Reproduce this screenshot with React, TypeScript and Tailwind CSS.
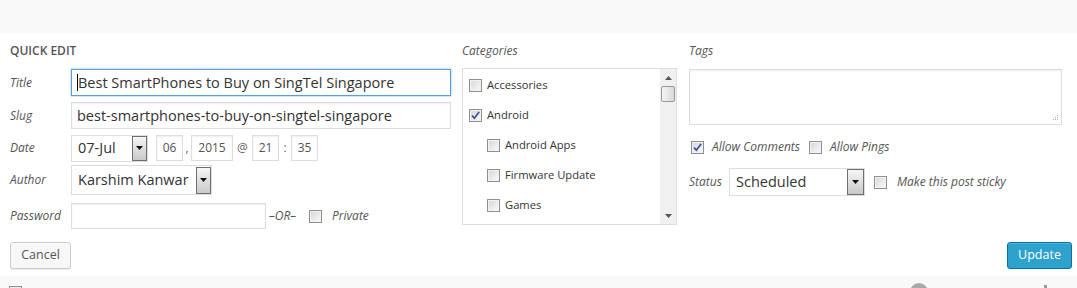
import React from "react";

const font = "font-['Open_Sans',sans-serif]";

function Check({ checked = false }: { checked?: boolean }) {
  return (
    <span className="flex h-[13px] w-[13px] shrink-0 items-center justify-center border border-[#8e8f8f] bg-linear-to-br from-[#d6d6d6] to-[#fbfbfb] shadow-[inset_0_0_0_1px_#f2f2f2]">
      {checked && (
        <svg width="11" height="11" viewBox="0 0 11 11">
          <path d="M2 5.6 L4.4 8.2 L9.2 1.8" fill="none" stroke="#3f4f9a" strokeWidth="1.7" />
        </svg>
      )}
    </span>
  );
}

function DropButton({ width }: { width: string }) {
  return (
    <span
      className={`flex h-full ${width} shrink-0 items-center justify-center border border-[#6f6f6f] bg-linear-to-b from-[#f6f6f6] to-[#c9c9c9]`}
    >
      <svg width="7" height="4" viewBox="0 0 7 4">
        <path d="M0 0 H7 L3.5 4 Z" fill="#111" />
      </svg>
    </span>
  );
}

function Label({ text, width }: { text: string; width: string }) {
  return <span className={`${width} shrink-0 text-[12px] italic text-[#555]`}>{text}</span>;
}

function SmallBox({ value, width }: { value: string; width: string }) {
  return (
    <span
      className={`flex h-[26px] ${width} items-center justify-center border border-[#ddd] bg-white text-[12px] text-[#555] shadow-[inset_0_1px_2px_rgba(0,0,0,0.07)]`}
    >
      {value}
    </span>
  );
}

const categories = [
  { name: "Accessories", checked: false, child: false },
  { name: "Android", checked: true, child: false },
  { name: "Android Apps", checked: false, child: true },
  { name: "Firmware Update", checked: false, child: true },
  { name: "Games", checked: false, child: true },
];

export default function App() {
  return (
    <div className={`${font} flex h-[288px] w-[1077px] flex-col overflow-hidden bg-[#f9f9f9]`}>
      {/* row above */}
      <div className="h-[33px] shrink-0" />

      {/* quick edit panel */}
      <div className="flex h-[243px] shrink-0 flex-col bg-white pl-[10px] pr-[5px] pt-[10px]">
        <div className="flex">
          {/* left column */}
          <div className="flex w-[441px] flex-col">
            <h4 className="h-4 text-[12px] leading-4 font-semibold text-[#555]">QUICK EDIT</h4>

            <div className="mt-[10px] flex h-[27px] items-center">
              <Label text="Title" width="w-[61px]" />
              <div className="flex h-full w-[380px] items-center border border-[#5b9dd9] bg-white pl-[5px] text-[14.5px] text-[#333] shadow-[0_0_2px_rgba(30,140,190,0.6)]">
                <span className="h-[17px] w-px bg-black" />
                <span>Best SmartPhones to Buy on SingTel Singapore</span>
              </div>
            </div>

            <div className="mt-[6px] flex h-[27px] items-center">
              <Label text="Slug" width="w-[61px]" />
              <div className="flex h-full w-[380px] items-center border border-[#ddd] bg-white pl-[5px] text-[14.5px] text-[#333] shadow-[inset_0_1px_2px_rgba(0,0,0,0.07)]">
                best-smartphones-to-buy-on-singtel-singapore
              </div>
            </div>

            <div className="mt-[5px] flex h-[28px] items-center">
              <Label text="Date" width="w-[61px]" />
              <div className="flex h-[27px] w-[77px] items-center border border-[#ddd] bg-white text-[14.5px] text-[#333]">
                <span className="flex-1 pl-[6px]">07-Jul</span>
                <DropButton width="w-[15px]" />
              </div>
              <span className="ml-[8px]" />
              <SmallBox value="06" width="w-[27px]" />
              <span className="w-[8px] text-center text-[12px] text-[#666]">,</span>
              <SmallBox value="2015" width="w-[42px]" />
              <span className="w-[19px] text-center text-[12px] text-[#666]">@</span>
              <SmallBox value="21" width="w-[27px]" />
              <span className="w-[12px] text-center text-[12px] text-[#666]">:</span>
              <SmallBox value="35" width="w-[27px]" />
            </div>

            <div className="mt-[3px] flex h-[30px] items-center">
              <Label text="Author" width="w-[61px]" />
              <div className="flex h-full w-[141px] items-center border border-[#ddd] bg-white text-[14.5px] text-[#333]">
                <span className="flex-1 pl-[6px]">Karshim Kanwar</span>
                <span className="flex h-[27px] items-center">
                  <DropButton width="w-[15px]" />
                </span>
              </div>
            </div>

            <div className="mt-[8px] flex h-[26px] items-center">
              <Label text="Password" width="w-[61px]" />
              <div className="h-full w-[195px] border border-[#ddd] bg-white shadow-[inset_0_1px_2px_rgba(0,0,0,0.07)]" />
              <span className="ml-[3px] text-[12px] italic text-[#555]">–OR–</span>
              <span className="ml-[13px]">
                <Check />
              </span>
              <span className="ml-[10px] text-[12px] italic text-[#555]">Private</span>
            </div>
          </div>

          {/* categories */}
          <div className="ml-[11px] flex w-[215px] flex-col">
            <span className="h-4 text-[12px] leading-4 italic text-[#555]">Categories</span>
            <div className="mt-[9px] flex h-[157px] overflow-hidden border border-[#ddd] bg-white">
              <ul className="flex flex-1 flex-col pt-px">
                {categories.map((c) => (
                  <li
                    key={c.name}
                    className={`flex h-[30px] items-center gap-[5px] ${c.child ? "pl-[24px]" : "pl-[6px]"}`}
                  >
                    <Check checked={c.checked} />
                    <span className="text-[11.2px] text-[#333]">{c.name}</span>
                  </li>
                ))}
              </ul>
              <div className="flex w-[16px] flex-col bg-[#f0f0f0]">
                <span className="flex h-[17px] items-center justify-center">
                  <svg width="7" height="4" viewBox="0 0 7 4">
                    <path d="M0 4 H7 L3.5 0 Z" fill="#555" />
                  </svg>
                </span>
                <span className="mx-px h-[16px] rounded-[2px] border border-[#999] bg-linear-to-r from-[#f4f4f4] to-[#d8d8d8]" />
                <span className="flex-1" />
                <span className="flex h-[17px] items-center justify-center">
                  <svg width="7" height="4" viewBox="0 0 7 4">
                    <path d="M0 0 H7 L3.5 4 Z" fill="#555" />
                  </svg>
                </span>
              </div>
            </div>
          </div>

          {/* tags + status */}
          <div className="ml-[12px] flex w-[373px] flex-col">
            <span className="h-4 text-[12px] leading-4 italic text-[#555]">Tags</span>
            <div className="mt-[10px] flex h-[56px] items-end justify-end border border-[#ddd] bg-white p-[2px] shadow-[inset_0_1px_2px_rgba(0,0,0,0.07)]">
              <svg width="7" height="7" viewBox="0 0 7 7">
                <g fill="#aaa">
                  <rect x="5" y="0" width="1" height="1" />
                  <rect x="3" y="2" width="1" height="1" />
                  <rect x="5" y="2" width="1" height="1" />
                  <rect x="1" y="4" width="1" height="1" />
                  <rect x="3" y="4" width="1" height="1" />
                  <rect x="5" y="4" width="1" height="1" />
                </g>
              </svg>
            </div>

            <div className="mt-[14px] flex h-4 items-center">
              <span className="ml-[2px]">
                <Check checked />
              </span>
              <span className="ml-[8px] text-[12px] italic text-[#555]">Allow Comments</span>
              <span className="ml-[9px]">
                <Check />
              </span>
              <span className="ml-[8px] text-[12px] italic text-[#555]">Allow Pings</span>
            </div>

            <div className="mt-[13px] flex h-[28px] items-center">
              <Label text="Status" width="w-[40px]" />
              <div className="flex h-full w-[136px] shrink-0 items-center border border-[#ddd] bg-white text-[14.5px] text-[#333]">
                <span className="flex-1 pl-[6px]">Scheduled</span>
                <DropButton width="w-[17px]" />
              </div>
              <span className="ml-[9px]">
                <Check />
              </span>
              <span className="ml-[10px] whitespace-nowrap text-[12px] italic text-[#555]">
                Make this post sticky
              </span>
            </div>
          </div>
        </div>

        {/* buttons */}
        <div className="mt-[13px] flex items-center justify-between">
          <button className="h-[27px] w-[61px] rounded-[3px] border border-[#ccc] bg-[#f7f7f7] text-[12.5px] text-[#555] shadow-[inset_0_1px_0_#fff,0_1px_0_rgba(0,0,0,0.08)]">
            Cancel
          </button>
          <button className="h-[27px] w-[65px] rounded-[3px] border border-[#0074a2] bg-[#2ea2cc] text-[12.5px] text-white shadow-[inset_0_1px_0_rgba(120,200,230,0.5)]">
            Update
          </button>
        </div>
      </div>

      {/* next row, cut off */}
      <div className="flex h-[12px] shrink-0 items-start">
        <span className="ml-[9px] mt-[10px] h-[13px] w-[13px] border border-[#8e8f8f] bg-[#eee]" />
        <span className="ml-[888px] mt-[7px] h-[18px] w-[18px] rounded-full bg-[#a8a8a8]" />
        <span className="ml-[116px] mt-[9px] h-[3px] w-[3px] bg-[#999]" />
      </div>
    </div>
  );
}
